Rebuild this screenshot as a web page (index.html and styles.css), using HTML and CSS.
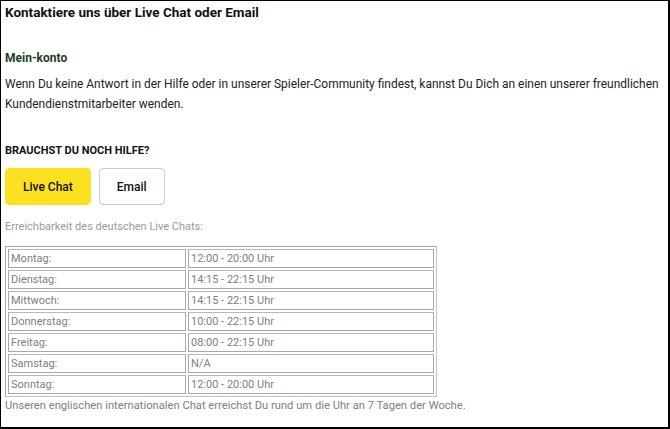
FILE: index.html
```html
<!DOCTYPE html>
<html lang="de">
<head>
    <meta charset="UTF-8">
    <meta name="viewport" content="width=device-width, initial-scale=1.0">
    <title>Kontakt - Live Chat oder Email</title>
    <link rel="stylesheet" href="styles.css">
</head>
<body>
    <div class="page">
        <h1 class="title">Kontaktiere uns über Live Chat oder Email</h1>

        <h2 class="section">Mein-konto</h2>
        <p class="intro">
            Wenn Du keine Antwort in der Hilfe oder in unserer Spieler-Community findest, kannst Du Dich an einen unserer freundlichen Kundendienstmitarbeiter wenden.
        </p>

        <h3 class="help">Brauchst Du noch Hilfe?</h3>
        <div class="actions">
            <button class="button primary">Live Chat</button>
            <button class="button">Email</button>
        </div>

        <p class="note">Erreichbarkeit des deutschen Live Chats:</p>

        <table class="hours">
            <tr><td>Montag:</td><td>12:00 - 20:00 Uhr</td></tr>
            <tr><td>Dienstag:</td><td>14:15 - 22:15 Uhr</td></tr>
            <tr><td>Mittwoch:</td><td>14:15 - 22:15 Uhr</td></tr>
            <tr><td>Donnerstag:</td><td>10:00 - 22:15 Uhr</td></tr>
            <tr><td>Freitag:</td><td>08:00 - 22:15 Uhr</td></tr>
            <tr><td>Samstag:</td><td>N/A</td></tr>
            <tr><td>Sonntag:</td><td>12:00 - 20:00 Uhr</td></tr>
        </table>

        <p class="footer">Unseren englischen internationalen Chat erreichst Du rund um die Uhr an 7 Tagen der Woche.</p>
    </div>
</body>
</html>
```

FILE: styles.css
```css
* {
    margin: 0;
    padding: 0;
    box-sizing: border-box;
}

body {
    background: #ffffff;
    color: #222222;
    font-family: Roboto, 'Liberation Sans', sans-serif;
}

.page {
    width: 670px;
    height: 429px;
    border-top: 1px solid #000000;
    border-left: 1px solid #000000;
    border-right: 2px solid #000000;
    border-bottom: 2px solid #000000;
    padding: 3px 0 0 4px;
}

.title {
    font-size: 13.5px;
    font-weight: 700;
    line-height: 16px;
    color: #111111;
}

.section {
    margin-top: 28px;
    font-size: 12px;
    font-weight: 700;
    line-height: 20px;
    color: #1b3f24;
}

.intro {
    margin-top: 6px;
    font-size: 11.95px;
    line-height: 20px;
    color: #222222;
}

.help {
    margin-top: 29px;
    font-size: 11px;
    font-weight: 700;
    line-height: 16px;
    text-transform: uppercase;
    color: #111111;
}

.actions {
    display: flex;
    gap: 8px;
    margin-top: 9px;
}

.button {
    height: 37px;
    padding: 0 17px;
    border: 1px solid #cccccc;
    border-radius: 4px;
    background: #ffffff;
    color: #111111;
    font-family: inherit;
    font-size: 12px;
    font-weight: 500;
    cursor: pointer;
}

.button.primary {
    background: #fbe122;
    border-color: #fbe122;
}

.note {
    margin-top: 14px;
    font-size: 11px;
    line-height: 16px;
    color: #9a9a9a;
}

.hours {
    margin-top: 11px;
    width: 432px;
    border: 1px solid #a8a8a8;
    border-right-color: #c4c4c4;
    border-bottom-color: #c4c4c4;
    border-spacing: 2px;
    font-size: 11px;
    color: #808080;
}

.hours td {
    height: 19px;
    padding: 1px 2px;
    line-height: 15px;
    border: 1px solid #a8a8a8;
    border-top-color: #b8b8b8;
}

.hours td:first-child {
    width: 178px;
}

.footer {
    margin-top: 1px;
    font-size: 11.2px;
    line-height: 16px;
    color: #808080;
}
```
